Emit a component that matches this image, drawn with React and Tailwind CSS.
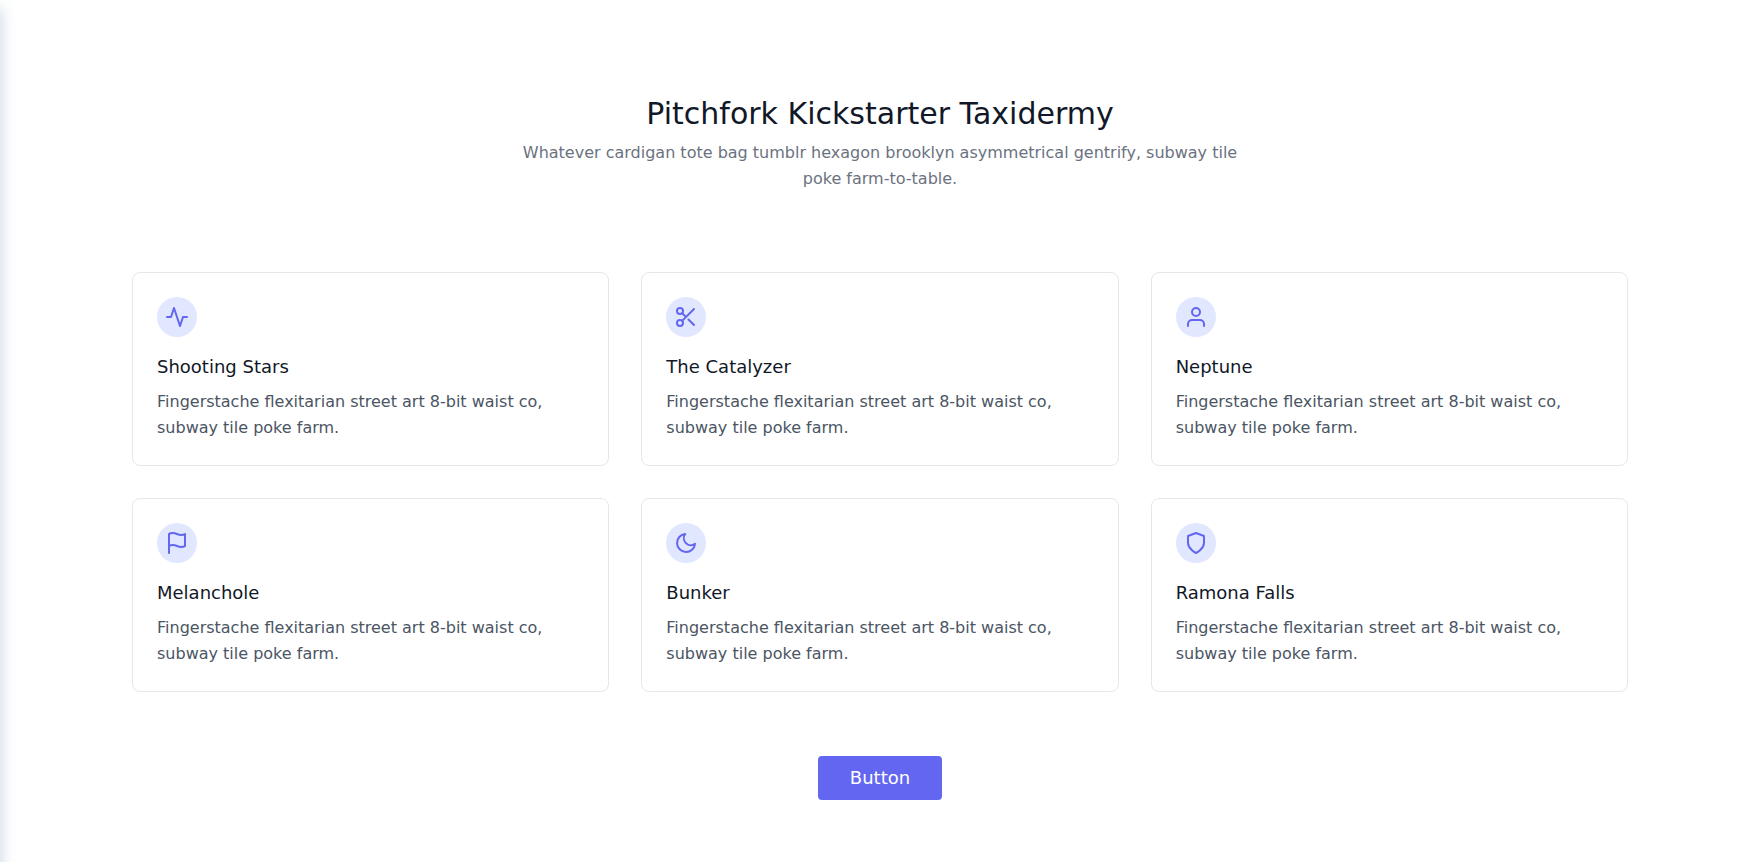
const FEATURES = [
  { title: "Shooting Stars", icon: <path d="M22 12h-4l-3 9L9 3l-3 9H2" /> },
  {
    title: "The Catalyzer",
    icon: (
      <>
        <circle cx="6" cy="6" r="3" />
        <circle cx="6" cy="18" r="3" />
        <path d="M20 4L8.12 15.88M14.47 14.48L20 20M8.12 8.12L12 12" />
      </>
    ),
  },
  {
    title: "Neptune",
    icon: (
      <>
        <path d="M20 21v-2a4 4 0 00-4-4H8a4 4 0 00-4 4v2" />
        <circle cx="12" cy="7" r="4" />
      </>
    ),
  },
  {
    title: "Melanchole",
    icon: <path d="M4 15s1-1 4-1 5 2 8 2 4-1 4-1V3s-1 1-4 1-5-2-8-2-4 1-4 1zM4 22v-7" />,
  },
  { title: "Bunker", icon: <path d="M21 12.79A9 9 0 1111.21 3 7 7 0 0021 12.79z" /> },
  { title: "Ramona Falls", icon: <path d="M12 22s8-4 8-10V5l-8-3-8 3v7c0 6 8 10 8 10z" /> },
];

function FeatureCard({ title, icon }) {
  return (
    <article className="rounded-lg border border-[#e5e7eb] p-6">
      <div className="mb-4 inline-flex h-10 w-10 items-center justify-center rounded-full bg-[#e0e7ff] text-[#6366f1]">
        <svg
          className="h-6 w-6"
          viewBox="0 0 24 24"
          fill="none"
          stroke="currentColor"
          strokeWidth="2"
          strokeLinecap="round"
          strokeLinejoin="round"
          aria-hidden="true"
        >
          {icon}
        </svg>
      </div>
      <h2 className="mb-2 text-lg font-medium text-[#111827]">{title}</h2>
      <p className="text-base leading-relaxed text-[#4b5563]">
        Fingerstache flexitarian street art 8-bit waist co, subway tile poke farm.
      </p>
    </article>
  );
}

export default function App() {
  return (
    <div className="relative min-h-screen overflow-hidden bg-white font-['DejaVu_Sans',sans-serif]">
      <div className="absolute top-0 right-full -bottom-8 w-64 shadow-[0_8px_16px_0_#c8d3e2]" />
      <section className="mx-auto max-w-[1536px] px-5 py-24">
        <div className="mb-20 flex flex-col items-center text-center">
          <h1 className="mb-2 text-3xl font-medium text-[#111827]">Pitchfork Kickstarter Taxidermy</h1>
          <p className="w-full leading-relaxed text-[#6b7280] lg:w-1/2">
            Whatever cardigan tote bag tumblr hexagon brooklyn asymmetrical gentrify, subway tile poke farm-to-table.
          </p>
        </div>
        <div className="grid gap-8 md:grid-cols-2 xl:grid-cols-3">
          {FEATURES.map((feature) => (
            <FeatureCard key={feature.title} {...feature} />
          ))}
        </div>
        <button type="button" className="mx-auto mt-16 flex rounded bg-[#6366f1] px-8 py-2 text-lg text-white">
          Button
        </button>
      </section>
    </div>
  );
}
